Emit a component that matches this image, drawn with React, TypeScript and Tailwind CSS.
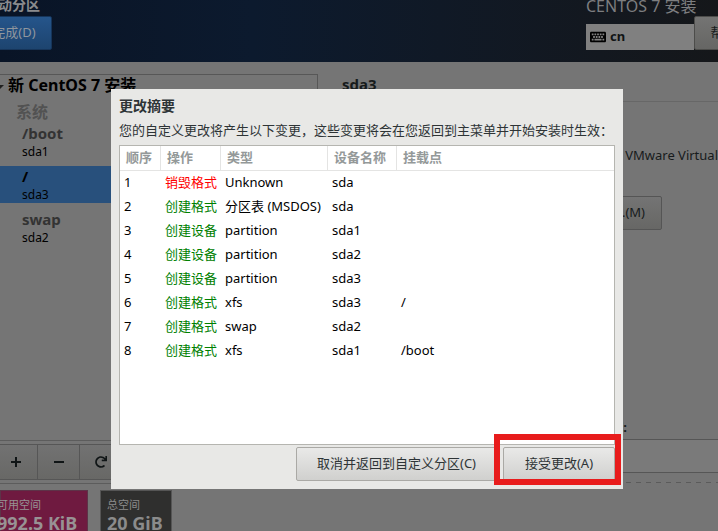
import { FaKeyboard, FaRedo } from "react-icons/fa";

type Change = {
  order: number;
  action: string;
  destroys?: boolean;
  type: string;
  device: string;
  mount?: string;
};

const changes: Change[] = [
  { order: 1, action: "销毁格式", destroys: true, type: "Unknown", device: "sda" },
  { order: 2, action: "创建格式", type: "分区表 (MSDOS)", device: "sda" },
  { order: 3, action: "创建设备", type: "partition", device: "sda1" },
  { order: 4, action: "创建设备", type: "partition", device: "sda2" },
  { order: 5, action: "创建设备", type: "partition", device: "sda3" },
  { order: 6, action: "创建格式", type: "xfs", device: "sda3", mount: "/" },
  { order: 7, action: "创建格式", type: "swap", device: "sda2" },
  { order: 8, action: "创建格式", type: "xfs", device: "sda1", mount: "/boot" },
];

const mounts = [
  { path: "/boot", device: "sda1" },
  { path: "/", device: "sda3", selected: true },
  { path: "swap", device: "sda2" },
];

function Header() {
  return (
    <header className="flex h-[62px] items-start justify-between overflow-hidden bg-linear-to-r from-[#091426] via-[#0c1a2e] via-35% to-[#15171a]">
      <div className="-ml-6 flex flex-col">
        <h1 className="-mt-2 ml-2 h-6 text-[14px] leading-[26px] font-bold text-[#8a8b8d]">手动分区</h1>
        <button className="h-[34px] w-[76px] rounded-xs border border-[#16355a] bg-linear-to-b from-[#25558b] to-[#1d446f] text-center text-[13px] text-[#8f969e]">
          完成(D)
        </button>
      </div>
      <div className="-mr-10 flex flex-col">
        <p className="-mt-1 h-5 text-[16px] leading-5 text-[#7d7e80]">CENTOS 7 安装</p>
        <div className="flex items-end">
          <button className="flex h-[26px] w-[108px] items-center gap-1 bg-[#808080] px-1 text-[13px] font-bold text-[#101314]">
            <FaKeyboard className="size-4 text-black" />
            cn
          </button>
          <button className="h-[34px] w-16 rounded-xs border border-[#4c4c4a] bg-linear-to-b from-[#747473] to-[#666664] pl-2 text-[13px] text-[#191c1d]">
            帮助！
          </button>
        </div>
      </div>
    </header>
  );
}

function MountPanel() {
  return (
    <section className="flex w-[318px] shrink-0 flex-col">
      <div className="mt-3 flex h-[366px] flex-col border-t border-r border-[#575757]">
        <h2 className="flex h-6 items-center gap-1 text-[16px] leading-5 font-bold text-black">
          <svg viewBox="0 0 4 4" className="h-1 w-1 fill-[#202020]">
            <path d="M0 0h4L0 4z" />
          </svg>
          <span className="h-6">新 CentOS 7 安装</span>
        </h2>
        <h3 className="h-6 pl-4 text-[16px] leading-[26px] font-bold text-[#525252]">系统</h3>
        <ul className="flex flex-col gap-1.5">
          {mounts.map((m) => (
            <li
              key={m.path}
              className={`flex h-[37px] flex-col pl-[22px] ${m.selected ? "bg-[#28507c]" : ""}`}
            >
              <span className={`text-[15px] leading-5 font-bold ${m.selected ? "text-black" : "text-[#333]"}`}>
                {m.path}
              </span>
              <span className="text-[12px] leading-[18px] text-black">{m.device}</span>
            </li>
          ))}
        </ul>
      </div>
      <div className="flex h-11 items-center border-y border-[#5c5c5c]">
        <div className="-ml-[5px] flex h-9 border-y border-[#565656] bg-linear-to-b from-[#727272] to-[#686866] text-[#101516]">
          <button aria-label="添加" className="flex w-[43px] items-center justify-center border-r border-[#565656]">
            <svg viewBox="0 0 10 10" className="size-2.5 fill-current">
              <path d="M4 0h2v4h4v2H6v4H4V6H0V4h4z" />
            </svg>
          </button>
          <button aria-label="删除" className="flex w-[42px] items-center justify-center border-r border-[#565656]">
            <svg viewBox="0 0 10 10" className="size-2.5 fill-current">
              <path d="M0 4h10v2H0z" />
            </svg>
          </button>
          <button aria-label="重新载入" className="flex w-[42px] items-center justify-center">
            <FaRedo className="size-3" />
          </button>
        </div>
      </div>
      <div className="mt-1.5 flex gap-3">
        <div className="w-[88px] border border-[#5d3348] bg-[#6f1a40] text-[#989294]">
          <p className="mt-1 -ml-1 text-[11px] leading-5">可用空间</p>
          <p className="-ml-1 h-5 text-[18px] leading-4 font-bold whitespace-nowrap">992.5 KiB</p>
        </div>
        <div className="w-[72px] border border-[#555] bg-[#2f2f2e] px-1.5 text-[#8b8b8b]">
          <p className="mt-1 text-[11px] leading-5">总空间</p>
          <p className="h-5 text-[18px] leading-4 font-bold whitespace-nowrap">20 GiB</p>
        </div>
      </div>
    </section>
  );
}

function DetailPanel() {
  return (
    <section className="flex min-w-0 flex-1 flex-col pl-6 text-[13px] text-[#171b1c]">
      <h2 className="mt-3 h-7 border-b border-[#676767] text-[15px] leading-5 font-bold">sda3</h2>
      <p className="mt-10 h-6 self-end leading-[26px] whitespace-nowrap">VMware Virtual</p>
      <button className="mt-[30px] mr-14 h-[34px] w-24 self-end rounded-xs border border-[#555] bg-linear-to-b from-[#747474] to-[#676765] pr-4 text-right">
        修改...(M)
      </button>
      <label htmlFor="device-name" className="mt-[187px] mr-[91px] h-[22px] self-end leading-5 font-bold">
        名称:
      </label>
      <input id="device-name" className="h-[34px] border-y border-[#565656] bg-[#7a7a7a]" />
      <svg className="mt-[9px] h-px w-full" aria-hidden="true">
        <line x1="4" x2="100%" y1="0.5" y2="0.5" stroke="#5b5b5b" strokeDasharray="5 5" />
      </svg>
    </section>
  );
}

function SummaryDialog() {
  const dialogButton =
    "rounded-xs border border-[#aaa9a5] bg-linear-to-b from-[#e9e9e8] to-[#d0d0ce] text-[13px] text-[#2e3436]";
  return (
    <div
      role="dialog"
      aria-labelledby="summary-title"
      className="flex h-[400px] w-[512px] flex-col bg-[#e8e8e6] px-2 pt-2 text-[13px] text-[#2e3436]"
    >
      <h2 id="summary-title" className="h-5 text-[14px] leading-[18px] font-bold">更改摘要</h2>
      <p className="h-7 leading-[26px] whitespace-nowrap">
        您的自定义更改将产生以下变更，这些变更将会在您返回到主菜单并开始安装时生效：
      </p>
      <div className="h-[300px] border border-[#b5b5b0] bg-white">
        <table className="w-full table-fixed border-separate border-spacing-0 text-left">
          <thead>
            <tr className="h-[25px] text-[#949999]">
              <th className="w-[41px] border-r border-b border-[#e4e4e3] p-0 pl-1.5">顺序</th>
              <th className="w-[60px] border-r border-b border-[#e4e4e3] p-0 pl-1.5">操作</th>
              <th className="w-[107px] border-r border-b border-[#e4e4e3] p-0 pl-1.5">类型</th>
              <th className="w-[69px] border-r border-b border-[#e4e4e3] p-0 pl-1.5 whitespace-nowrap">设备名称</th>
              <th className="border-b border-[#e4e4e3] p-0 pl-1.5">挂载点</th>
            </tr>
          </thead>
          <tbody className="text-black">
            {changes.map((c) => (
              <tr key={c.order} className="h-6 whitespace-nowrap">
                <td className="p-0 pl-1">{c.order}</td>
                <td className={`p-0 pl-1 ${c.destroys ? "text-[#ff0000]" : "text-[#008000]"}`}>{c.action}</td>
                <td className="p-0 pl-1">{c.type}</td>
                <td className="p-0 pl-1">{c.device}</td>
                <td className="p-0 pl-1">{c.mount}</td>
              </tr>
            ))}
          </tbody>
        </table>
      </div>
      <div className="mt-0.5 flex justify-end gap-1.5">
        <button className={`h-[34px] w-[201px] ${dialogButton}`}>取消并返回到自定义分区(C)</button>
        <div className="relative">
          <button className={`h-[34px] w-28 ${dialogButton}`}>接受更改(A)</button>
          <div className="pointer-events-none absolute -top-[13px] -right-1.5 -bottom-1 -left-[9px] border-6 border-[#e81c1c]" />
        </div>
      </div>
    </div>
  );
}

export default function App() {
  return (
    <div className="relative h-screen overflow-hidden bg-[#757575] font-['Noto_Sans','Noto_Sans_CJK_SC',sans-serif]">
      <Header />
      <main className="flex">
        <MountPanel />
        <DetailPanel />
      </main>
      <div className="absolute inset-0 flex items-start justify-center pt-[89px] pl-4">
        <SummaryDialog />
      </div>
    </div>
  );
}
